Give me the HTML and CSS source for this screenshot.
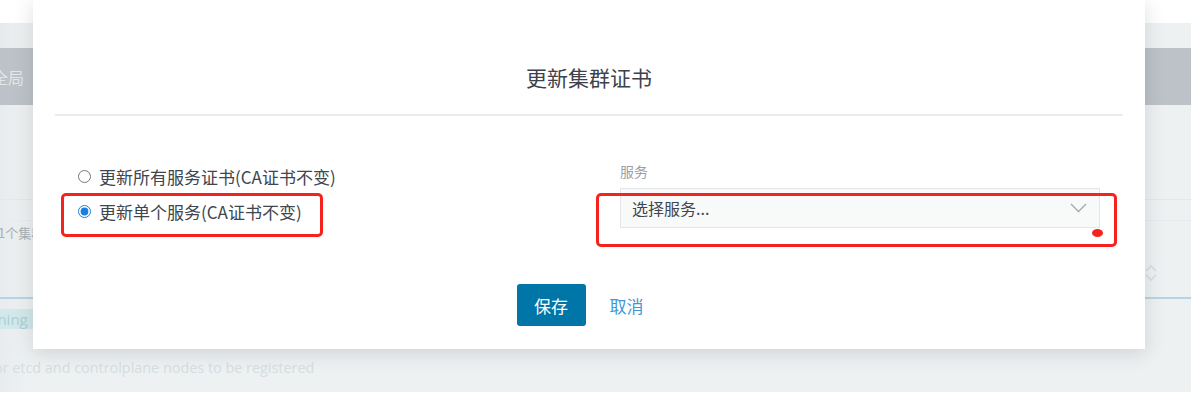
FILE: index.html
```html
<!DOCTYPE html>
<html lang="zh-CN">
<head>
    <meta charset="UTF-8">
    <title>更新集群证书</title>
    <link rel="stylesheet" href="styles.css">
</head>
<body>
    <div class="page">
        <div class="page-top"></div>
        <div class="nav-band"><span class="nav-text">全局</span></div>
        <div class="content-area">
            <div class="row-line first"></div>
            <div class="row-line second"><span class="cluster-count">共1个集群</span></div>
            <div class="row-line third">
                <svg class="sort-icon" width="14" height="18" viewBox="0 0 14 18">
                    <path d="M2 7 L7 2 L12 7 M2 11 L7 16 L12 11" fill="none" stroke="#d6dde1" stroke-width="1.6"/>
                </svg>
            </div>
            <div class="table-head"></div>
            <div class="state-row"><span class="state-badge">Provisioning</span></div>
            <div class="state-msg">Waiting for etcd and controlplane nodes to be registered</div>
        </div>
    </div>

    <div class="modal">
        <div class="modal-header">
            <h2 class="modal-title">更新集群证书</h2>
        </div>
        <div class="modal-body">
            <div class="col-left">
                <label class="radio-row">
                    <input type="radio" name="mode">
                    <span>更新所有服务证书(CA证书不变)</span>
                </label>
                <label class="radio-row">
                    <input type="radio" name="mode" checked>
                    <span>更新单个服务(CA证书不变)</span>
                </label>
            </div>
            <div class="col-right">
                <div class="field-label">服务</div>
                <div class="select-box">
                    <span>选择服务...</span>
                    <svg class="chevron" width="17" height="10" viewBox="0 0 17 10">
                        <path d="M1 1 L8.5 8.5 L16 1" fill="none" stroke="#a3a9b0" stroke-width="1.3"/>
                    </svg>
                </div>
            </div>
        </div>
        <div class="modal-footer">
            <button class="btn-save">保存</button>
            <button class="btn-cancel">取消</button>
        </div>

        <!-- red annotation marks -->
        <div class="mark mark-left"></div>
        <div class="mark mark-right"></div>
        <div class="mark-dot"></div>
    </div>
</body>
</html>
```

FILE: styles.css
```css
body {
    margin: 0;
    font-family: "Noto Sans CJK SC", "Liberation Sans", sans-serif;
    background-color: white;
    width: 1191px;
    height: 394px;
    overflow: hidden;
    position: relative;
}
.page {
    padding-top: 23px;
}
.page-top {
    height: 25px;
    background: linear-gradient(to right, #e6eaec, #eef1f2 30px);
}
.nav-band {
    height: 57px;
    background-color: #bcc2c8;
    display: flex;
    align-items: center;
}
.nav-text {
    margin-left: -8px;
    font-size: 16px;
    color: #e4e7ea;
}
.content-area {
    background: linear-gradient(to right, #e8ecee, #eef1f2 30px);
    height: 287px;
}
.row-line {
    border-bottom: 1px solid #e4e8ea;
    display: flex;
    align-items: center;
}
.row-line.first {
    height: 94px;
}
.row-line.second {
    height: 20px;
    border-bottom-color: #e7ebed;
}
.row-line.third {
    height: 33px;
    border-bottom: none;
    justify-content: flex-end;
}
.cluster-count {
    margin-left: -15px;
    margin-top: 44px;
    font-size: 13px;
    color: #a9afb4;
}
.sort-icon {
    margin-right: 33px;
    margin-top: 71px;
}
.table-head {
    margin-top: 43px;
    height: 2px;
    background-color: #b8d3e7;
}
.state-row {
    height: 40px;
    display: flex;
    align-items: center;
}
.state-badge {
    margin-left: -64px;
    padding: 0 6px;
    height: 20px;
    line-height: 20px;
    font-size: 15px;
    font-family: "Open Sans", "Liberation Sans", sans-serif;
    background-color: #d3e8ea;
    color: #a9d0d5;
}
.state-msg {
    margin-left: -65px;
    margin-top: 19px;
    font-size: 14.4px;
    font-family: "Open Sans", "Liberation Sans", sans-serif;
    color: #d5dee1;
    white-space: nowrap;
}

.modal {
    position: absolute;
    left: 33px;
    top: 0;
    width: 1112px;
    height: 349px;
    box-sizing: border-box;
    padding: 0 22px;
    background-color: white;
    box-shadow: 0 4px 18px rgba(60, 70, 80, 0.18);
}
.modal-header {
    padding-top: 63px;
    padding-bottom: 23px;
    border-bottom: 2px solid #e9edee;
    text-align: center;
}
.modal-title {
    margin: 0;
    font-size: 21px;
    line-height: 28px;
    font-weight: normal;
    color: #3d424c;
}
.modal-body {
    display: grid;
    grid-template-columns: 1fr 480px;
    padding: 46px 23px 0 23px;
}
.col-left {
    padding-top: 2px;
    display: flex;
    flex-direction: column;
    gap: 11px;
}
.radio-row {
    display: flex;
    align-items: center;
    height: 24px;
    font-size: 17px;
    color: #40454e;
}
.radio-row input {
    margin: 0 8px 0 0;
    width: 13px;
    height: 13px;
    accent-color: #1a7fe0;
}
.field-label {
    font-size: 14px;
    line-height: 18px;
    color: #9aa0a6;
    margin-bottom: 8px;
}
.select-box {
    height: 40px;
    box-sizing: border-box;
    border: 1px solid #e4e7e9;
    background-color: #f8f9f9;
    display: flex;
    align-items: center;
    justify-content: space-between;
    padding: 0 11px 0 11px;
    font-size: 16px;
    color: #40454e;
}
.chevron {
    margin-right: 1px;
}
.modal-footer {
    margin-top: 56px;
    display: flex;
    justify-content: center;
    gap: 12px;
    padding-right: 6px;
}
.btn-save {
    width: 69px;
    height: 42px;
    border: none;
    border-radius: 3px;
    background-color: #0075a8;
    color: white;
    font-family: inherit;
    font-size: 17px;
    cursor: pointer;
}
.btn-cancel {
    border: none;
    background: none;
    padding: 0 12px;
    color: #3d98d3;
    font-family: inherit;
    font-size: 17px;
    cursor: pointer;
}

.mark {
    position: absolute;
    border: 3px solid #f5231d;
    border-radius: 5px;
}
.mark-left {
    left: 28px;
    top: 193px;
    width: 256px;
    height: 38px;
}
.mark-right {
    left: 563px;
    top: 193px;
    width: 515px;
    height: 48px;
}
.mark-dot {
    position: absolute;
    left: 1059px;
    top: 229px;
    width: 11px;
    height: 8px;
    border-radius: 50%;
    background-color: #f5231d;
}
```
